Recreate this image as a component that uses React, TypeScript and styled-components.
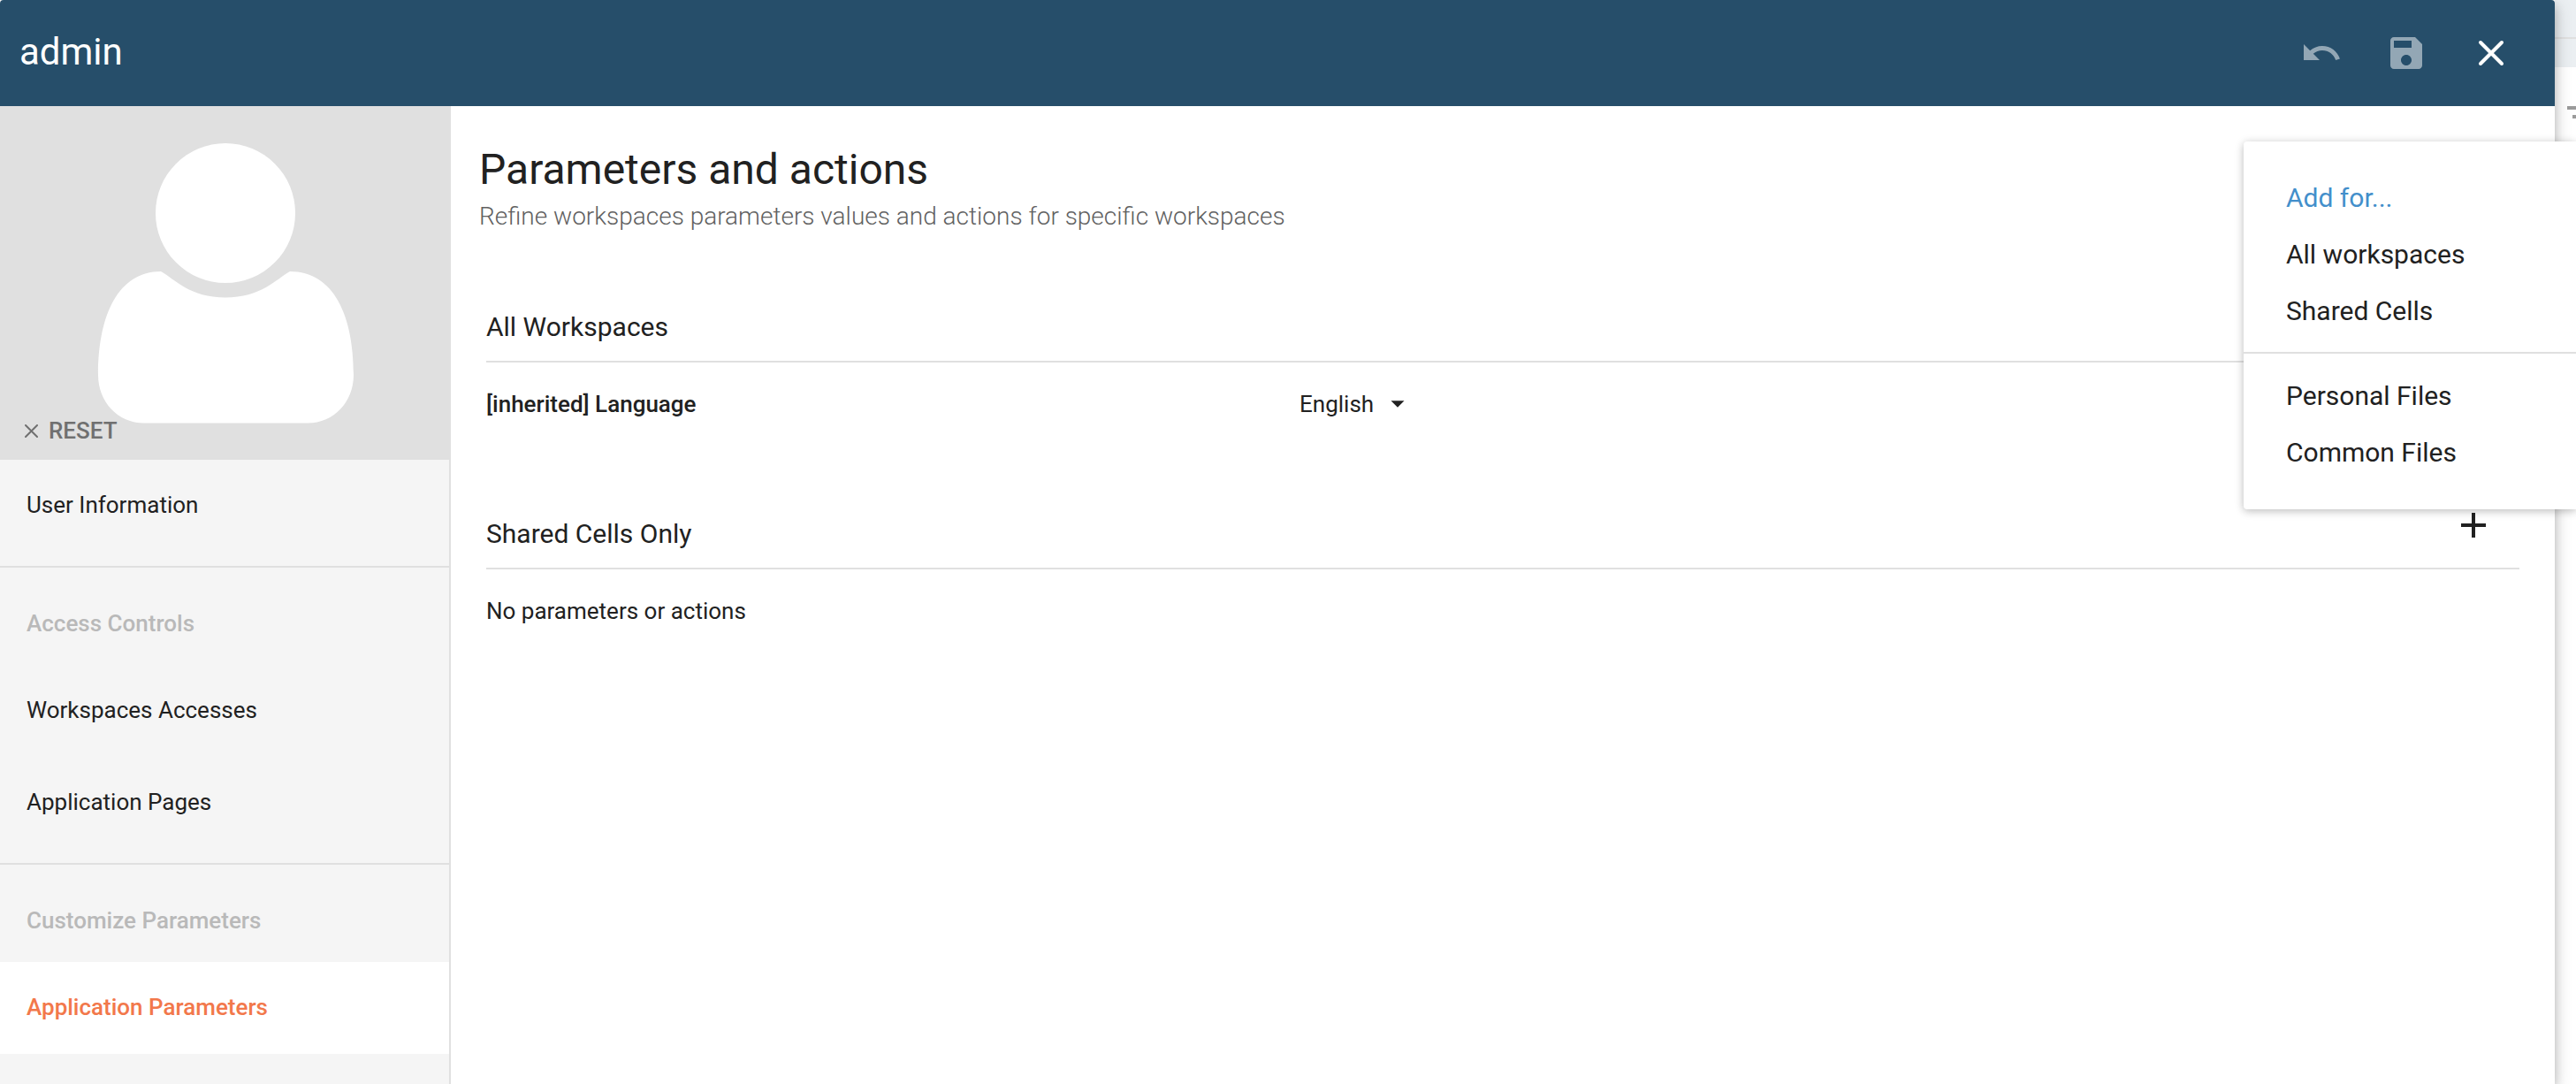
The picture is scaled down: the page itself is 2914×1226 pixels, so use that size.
import React from "react";
import styled, { createGlobalStyle } from "styled-components";

const color = {
  header: "#264e6a",
  ink: "#212121",
  line: "#e0e0e0",
  side: "#f5f5f5",
  accent: "#f2784b",
  link: "#438fcb",
};

const GlobalStyle = createGlobalStyle`
  *, *::before, *::after { box-sizing: border-box; }
  body { margin: 0; background: #fff; }
  body, button, select { font-family: Roboto, "Noto Sans", sans-serif; }
  h1, h2, h3, p, ul { margin: 0; padding: 0; font-weight: 400; }
  ul { list-style: none; }
`;

const Page = styled.div`
  position: relative;
  display: flex;
  min-height: 100vh;
  overflow: hidden;
  color: ${color.ink};
`;

const Dialog = styled.section`
  position: relative;
  z-index: 1;
  flex: 1;
  min-width: 0;
  display: flex;
  flex-direction: column;
  background: #fff;
  border-radius: 4px 4px 0 0;
  box-shadow: 0 6px 20px rgba(0, 0, 0, 0.2), 0 6px 12px rgba(0, 0, 0, 0.16);
`;

const Backdrop = styled.aside`
  flex: none;
  width: 24px;
  overflow: hidden;
  display: flex;
  flex-direction: column;
`;

const BackdropBar = styled.div<{ $height: number; $ruled?: boolean }>`
  height: ${(p) => p.$height}px;
  background: #ebeff2;
  border-bottom: ${(p) => (p.$ruled ? `2px solid ${color.line}` : "none")};
`;

const BackdropBody = styled.div`
  flex: 1;
  padding: 32px 8px;
`;

const Header = styled.header`
  display: flex;
  align-items: center;
  justify-content: space-between;
  height: 120px;
  padding: 0 24px 0 22px;
  background: ${color.header};
  color: #fff;
  border-radius: 4px 4px 0 0;
`;

const UserName = styled.h1`
  padding-bottom: 2px;
  font-size: 42px;
  line-height: 52px;
`;

const Toolbar = styled.div`
  display: flex;
`;

const IconButton = styled.button`
  display: grid;
  place-items: center;
  width: 96px;
  height: 96px;
  padding: 0;
  border: 0;
  background: none;
  color: inherit;
  cursor: pointer;

  &:disabled {
    opacity: 0.5;
    cursor: default;
  }
`;

const Icon = styled.svg<{ $size?: number }>`
  display: block;
  flex: none;
  width: ${(p) => p.$size ?? 48}px;
  height: ${(p) => p.$size ?? 48}px;
  fill: currentColor;
`;

const Body = styled.div`
  flex: 1;
  display: flex;
`;

const Sidebar = styled.nav`
  flex: none;
  width: 510px;
  background: ${color.side};
  border-right: 2px solid ${color.line};
`;

const Avatar = styled.div`
  position: relative;
  height: 400px;
  margin-right: -2px;
  background: ${color.line};
`;

const AvatarDrawing = styled.svg`
  display: block;
  width: 100%;
  height: 400px;
  fill: #fff;
`;

const ResetButton = styled.button`
  position: absolute;
  left: 24px;
  bottom: 15px;
  display: flex;
  align-items: center;
  gap: 12px;
  padding: 0 4px;
  border: 0;
  background: none;
  color: #707070;
  font-size: 26px;
  font-weight: 500;
  line-height: 36px;
  cursor: pointer;
`;

const NavGroup = styled.div`
  padding-bottom: 16px;

  & + & {
    border-top: 2px solid ${color.line};
  }
`;

const NavHeading = styled.h3`
  padding: 16px 30px 0;
  color: #b9b9b9;
  font-size: 26px;
  font-weight: 500;
  line-height: 94px;
`;

const NavLink = styled.a<{ $active?: boolean }>`
  display: block;
  padding: 0 30px 2px;
  background: ${(p) => (p.$active ? "#fff" : "transparent")};
  color: ${(p) => (p.$active ? color.accent : color.ink)};
  font-size: 26px;
  font-weight: ${(p) => (p.$active ? 500 : 400)};
  line-height: 102px;
  text-decoration: none;
`;

const Main = styled.main`
  flex: 1;
  min-width: 0;
  padding: 40px 40px 40px 32px;
`;

const Title = styled.h2`
  font-size: 48px;
  line-height: 64px;
`;

const Subtitle = styled.p`
  color: #616161;
  font-size: 28px;
  font-weight: 300;
  line-height: 42px;
`;

const Sections = styled.div`
  display: flex;
  flex-direction: column;
  gap: 42px;
  padding: 46px 0 0 8px;
`;

const SectionHeader = styled.div`
  display: flex;
  align-items: center;
  justify-content: space-between;
  height: 98px;
  padding-right: 4px;
  border-bottom: 2px solid ${color.line};
`;

const SectionTitle = styled.h3`
  padding-top: 20px;
  font-size: 30px;
  line-height: 40px;
`;

const SectionRow = styled.div`
  display: grid;
  grid-template-columns: 40% 60%;
  align-items: center;
  height: 94px;
  font-size: 26px;
`;

const Label = styled.label`
  font-weight: 500;
`;

const SelectBox = styled.div`
  display: flex;
  align-items: center;
`;

const Select = styled.select`
  appearance: none;
  padding: 0 48px 0 0;
  margin-right: -40px;
  border: 0;
  background: none;
  color: inherit;
  font-size: 26px;
  line-height: 40px;
  cursor: pointer;
`;

const SelectArrow = styled(Icon)`
  pointer-events: none;
`;

const Menu = styled.div`
  position: absolute;
  z-index: 2;
  top: 160px;
  right: 0;
  width: 376px;
  padding: 32px 0;
  background: #fff;
  border-radius: 4px 0 0 4px;
  box-shadow: 0 2px 12px rgba(0, 0, 0, 0.14), 0 2px 8px rgba(0, 0, 0, 0.14);
`;

const MenuItem = styled.button<{ $primary?: boolean }>`
  display: block;
  width: 100%;
  padding: 0 48px;
  border: 0;
  background: none;
  color: ${(p) => (p.$primary ? color.link : color.ink)};
  font-size: 30px;
  line-height: 64px;
  text-align: left;
  cursor: pointer;
`;

const MenuRule = styled.hr`
  height: 2px;
  margin: 14px 0 16px;
  border: 0;
  background: ${color.line};
`;

const paths = {
  undo: "M12.5 8c-2.65 0-5.05.99-6.9 2.6L2 7v9h9l-3.62-3.62c1.39-1.16 3.16-1.88 5.12-1.88 3.54 0 6.55 2.31 7.6 5.5l2.37-.78C21.08 11.03 17.15 8 12.5 8z",
  save: "M17 3H5c-1.11 0-2 .9-2 2v14c0 1.1.89 2 2 2h14c1.1 0 2-.9 2-2V7l-4-4zm-5 16c-1.66 0-3-1.34-3-3s1.34-3 3-3 3 1.34 3 3-1.34 3-3 3zm3-10H5V5h10v4z",
  add: "M19 13h-6v6h-2v-6H5v-2h6V5h2v6h6v2z",
  filter: "M10 18h4v-2h-4v2zM3 6v2h18V6H3zm3 7h12v-2H6v2z",
};

const Glyph = ({ name }: { name: keyof typeof paths }) => (
  <Icon viewBox="0 0 24 24" aria-hidden="true">
    <path d={paths[name]} />
  </Icon>
);

export default function App() {
  return (
    <>
      <GlobalStyle />
      <Page>
        <Dialog>
          <Header>
            <UserName>admin</UserName>
            <Toolbar>
              <IconButton aria-label="Undo" disabled>
                <Glyph name="undo" />
              </IconButton>
              <IconButton aria-label="Save" disabled>
                <Glyph name="save" />
              </IconButton>
              <IconButton aria-label="Close">
                <Icon viewBox="0 0 24 24" aria-hidden="true">
                  <path d="M6 6l12 12M18 6L6 18" stroke="currentColor" strokeWidth="2" strokeLinecap="round" />
                </Icon>
              </IconButton>
            </Toolbar>
          </Header>

          <Body>
            <Sidebar>
              <Avatar>
                <AvatarDrawing viewBox="0 0 510 400" aria-hidden="true">
                  <circle cx="255" cy="121" r="79" />
                  <path d="M182 187 C198 196 215 216.500 255 216.500 C295 216.500 312 196 328 187 C377 187 400 236 400 304 C400 334 378 358.500 348 358.500 H163 C133 358.500 111 334 111 304 C111 236 134 187 182 187 Z" />
                </AvatarDrawing>
                <ResetButton>
                  <Icon $size={15} viewBox="0 0 15 15" aria-hidden="true">
                    <path d="M1 1l13 13M14 1L1 14" stroke="currentColor" strokeWidth="2" strokeLinecap="round" />
                  </Icon>
                  RESET
                </ResetButton>
              </Avatar>
              <NavGroup>
                <NavLink href="#info">User Information</NavLink>
              </NavGroup>
              <NavGroup>
                <NavHeading>Access Controls</NavHeading>
                <NavLink href="#workspaces">Workspaces Accesses</NavLink>
                <NavLink href="#pages">Application Pages</NavLink>
              </NavGroup>
              <NavGroup>
                <NavHeading>Customize Parameters</NavHeading>
                <NavLink href="#parameters" $active aria-current="page">
                  Application Parameters
                </NavLink>
              </NavGroup>
            </Sidebar>

            <Main>
              <Title>Parameters and actions</Title>
              <Subtitle>Refine workspaces parameters values and actions for specific workspaces</Subtitle>
              <Sections>
                <section>
                  <SectionHeader>
                    <SectionTitle>All Workspaces</SectionTitle>
                  </SectionHeader>
                  <SectionRow>
                    <Label htmlFor="language">[inherited] Language</Label>
                    <SelectBox>
                      <Select id="language" defaultValue="en">
                        <option value="en">English</option>
                      </Select>
                      <SelectArrow $size={36} viewBox="0 0 24 24" aria-hidden="true">
                        <path d="M7 9.500l5 5 5-5z" />
                      </SelectArrow>
                    </SelectBox>
                  </SectionRow>
                </section>
                <section>
                  <SectionHeader>
                    <SectionTitle>Shared Cells Only</SectionTitle>
                    <IconButton aria-label="Add">
                      <Glyph name="add" />
                    </IconButton>
                  </SectionHeader>
                  <SectionRow>
                    <p>No parameters or actions</p>
                  </SectionRow>
                </section>
              </Sections>
            </Main>
          </Body>
        </Dialog>

        <Backdrop aria-hidden="true">
          <BackdropBar $height={44} $ruled />
          <BackdropBar $height={32} />
          <BackdropBody>
            <Icon viewBox="0 0 24 24" color="#9b9b9b">
              <path d={paths.filter} />
            </Icon>
          </BackdropBody>
        </Backdrop>

        <Menu>
          <MenuItem $primary>Add for...</MenuItem>
          <MenuItem>All workspaces</MenuItem>
          <MenuItem>Shared Cells</MenuItem>
          <MenuRule />
          <MenuItem>Personal Files</MenuItem>
          <MenuItem>Common Files</MenuItem>
        </Menu>
      </Page>
    </>
  );
}
